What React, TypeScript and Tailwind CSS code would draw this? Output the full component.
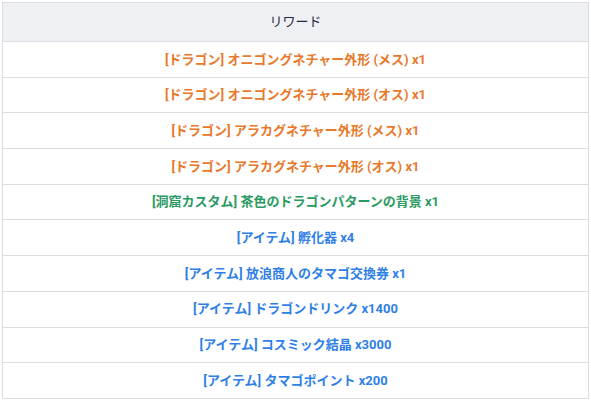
const rows = [
  { text: '[ドラゴン] オニゴングネチャー外形 (メス) x1', color: 'text-[#e8782a]' },
  { text: '[ドラゴン] オニゴングネチャー外形 (オス) x1', color: 'text-[#e8782a]' },
  { text: '[ドラゴン] アラカグネチャー外形 (メス) x1', color: 'text-[#e8782a]' },
  { text: '[ドラゴン] アラカグネチャー外形 (オス) x1', color: 'text-[#e8782a]' },
  { text: '[洞窟カスタム] 茶色のドラゴンパターンの背景 x1', color: 'text-[#2a9a62]' },
  { text: '[アイテム] 孵化器 x4', color: 'text-[#2f7fe6]' },
  { text: '[アイテム] 放浪商人のタマゴ交換券 x1', color: 'text-[#2f7fe6]' },
  { text: '[アイテム] ドラゴンドリンク x1400', color: 'text-[#2f7fe6]' },
  { text: '[アイテム] コスミック結晶 x3000', color: 'text-[#2f7fe6]' },
  { text: '[アイテム] タマゴポイント x200', color: 'text-[#2f7fe6]' },
]

export default function App() {
  return (
    <div className="bg-white p-[2px] font-['Roboto','Noto_Sans_CJK_JP',sans-serif]">
      <table className="w-full border-collapse border border-[#dcdde3]">
        <thead>
          <tr className="bg-[#eff0f3]">
            <th className="h-[39px] text-center text-[13px] font-normal text-[#1f2a40] border-b border-[#dcdde3]">
              リワード
            </th>
          </tr>
        </thead>
        <tbody>
          {rows.map((r, i) => (
            <tr key={i}>
              <td
                className={`h-[35.7px] text-center text-[13px] font-bold border-b border-[#dcdde3] ${r.color}`}
              >
                {r.text}
              </td>
            </tr>
          ))}
        </tbody>
      </table>
    </div>
  )
}
